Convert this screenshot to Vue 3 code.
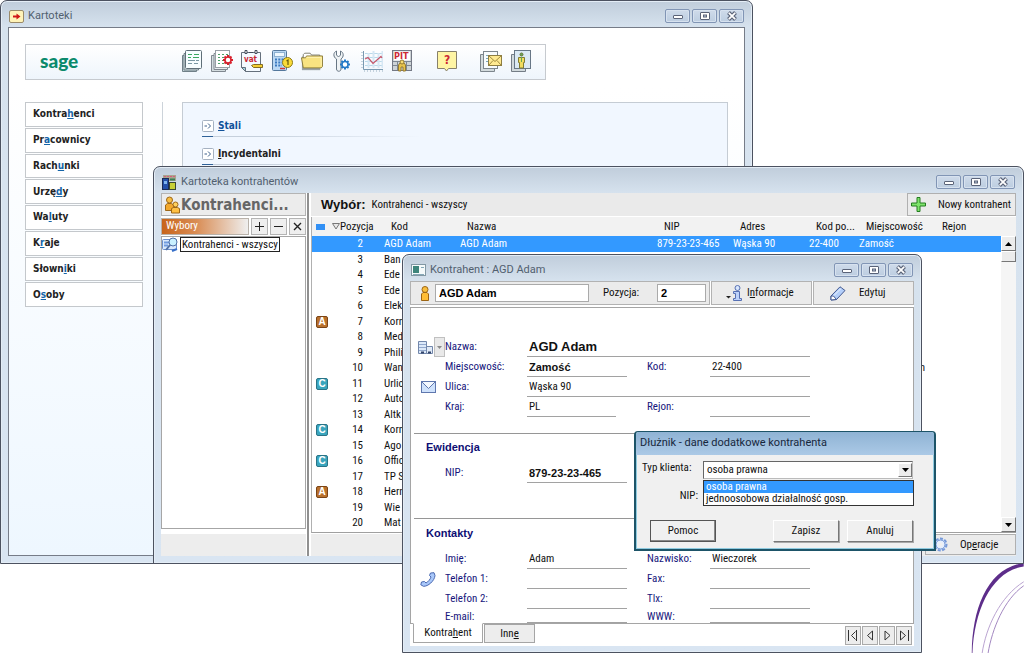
<script setup>
import { ref, h } from 'vue'

const WinButtons = () =>
  h('div', { class: 'win-buttons' }, [
    h('button', { type: 'button', 'aria-label': 'Minimalizuj' }, [
      h('svg', { viewBox: '0 0 14 10', width: 14, height: 10 }, [
        h('rect', { x: 2.5, y: 4.5, width: 9, height: 3, rx: 0.5, fill: '#fff', stroke: '#5a6378' })
      ])
    ]),
    h('button', { type: 'button', 'aria-label': 'Maksymalizuj' }, [
      h('svg', { viewBox: '0 0 14 10', width: 14, height: 10 }, [
        h('rect', { x: 2.5, y: 1.5, width: 9, height: 7, rx: 0.5, fill: '#fff', stroke: '#5a6378' }),
        h('rect', { x: 5.5, y: 4, width: 3, height: 2, fill: '#b9c9dc', stroke: '#5a6378' })
      ])
    ]),
    h('button', { type: 'button', 'aria-label': 'Zamknij' }, [
      h('svg', { viewBox: '0 0 14 10', width: 14, height: 10 }, [
        h('path', { d: 'M3.5 1.5L10.5 8.5M10.5 1.5L3.5 8.5', stroke: '#5a6378', 'stroke-width': 4 }),
        h('path', { d: 'M3.8 1.8L10.2 8.2M10.2 1.8L3.8 8.2', stroke: '#fff', 'stroke-width': 1.8 })
      ])
    ])
  ])

const menu = [
  ['Kontra', 'h', 'enci'],
  ['Pr', 'a', 'cownicy'],
  ['Rach', 'u', 'nki'],
  ['Urzę', 'd', 'y'],
  ['Wa', 'l', 'uty'],
  ['K', 'r', 'aje'],
  ['Słown', 'i', 'ki'],
  ['O', 's', 'oby']
]

const rows = [
  { pos: 2, kod: 'AGD Adam', nazwa: 'AGD Adam', nip: '879-23-23-465', adres: 'Wąska 90', poczta: '22-400', miasto: 'Zamość' },
  { pos: 3, kod: 'Ban' },
  { pos: 4, kod: 'Ede' },
  { pos: 5, kod: 'Ede' },
  { pos: 6, kod: 'Elek' },
  { pos: 7, kod: 'Korn', tag: 'A' },
  { pos: 8, kod: 'Med' },
  { pos: 9, kod: 'Phili' },
  { pos: 10, kod: 'Wan', tail: 'n' },
  { pos: 11, kod: 'Urlic', tag: 'C' },
  { pos: 12, kod: 'Auto' },
  { pos: 13, kod: 'Altk' },
  { pos: 14, kod: 'Korn', tag: 'C' },
  { pos: 15, kod: 'Ago' },
  { pos: 16, kod: 'Offic', tag: 'C' },
  { pos: 17, kod: 'TP S' },
  { pos: 18, kod: 'Hern', tag: 'A' },
  { pos: 19, kod: 'Wie' },
  { pos: 20, kod: 'Mat' }
]

const name = ref('AGD Adam')
const position = ref('2')
const clientTypes = ['osoba prawna', 'jednoosobowa działalność gosp.']
const clientType = ref(clientTypes[0])
</script>

<template>
  <main class="desktop">
    <svg class="swoosh" viewBox="0 0 54 92" aria-hidden="true">
      <path d="M1.500 92C2 46 18 6 54 1V4.500C22 9 4 48 2.200 92Z" fill="#5d2d8a" />
      <path d="M12 92C16 66 30 35 54 20" fill="none" stroke="#b9a3d0" />
      <path d="M18 92C22 68 34 38 54 24" fill="none" stroke="#a287c0" />
    </svg>

    <section class="window files" aria-label="Kartoteki">
      <header class="titlebar">
        <svg class="title-icon" viewBox="0 0 15 13" width="15" height="13">
          <rect x=".5" y=".5" width="14" height="12" rx="1.500" fill="#fff3b8" stroke="#9a8a6a" />
          <path d="M4 5.500H7.500V3.500L11.500 6.500L7.500 9.500V7.500H4Z" fill="#d01818" />
        </svg>
        <h1>Kartoteki</h1>
        <WinButtons />
      </header>
      <div class="files-body">
        <nav class="toolbar" aria-label="Narzędzia">
          <span class="logo">sage</span>
          <div class="tools">
            <button type="button" aria-label="Dokumenty">
              <svg viewBox="0 0 22 22">
                <path d="M1.500 5.500H15.500V21.500H1.500Z" fill="#c3d2d6" stroke="#708088" />
                <path d="M3 3.500H17.500V20H3Z" fill="#d8e4e6" stroke="#708088" />
                <rect x="4.500" y=".5" width="16" height="18" rx="1" fill="#f6fdff" stroke="#5f6f78" />
                <path d="M7 4.500H11M13 4.500H18M7 7.500H10M12 7.500H18" stroke="#38a860" />
                <path d="M7 10.500H14M15 10.500H18M7 13.500H11M13 13.500H17" stroke="#7a98a4" />
              </svg>
            </button>
            <button type="button" aria-label="Ustawienia dokumentów">
              <svg viewBox="0 0 22 22">
                <path d="M.5 5.500H14.500V21.500H.5Z" fill="#d4dde0" stroke="#808890" />
                <path d="M3 3.500H16.500V19.500H3Z" fill="#e6ecee" stroke="#808890" />
                <rect x="4.500" y=".5" width="14" height="17" fill="#fff" stroke="#98a0a6" />
                <path d="M7 4.500H17M7 7.500H17M7 10.500H17M7 13.500H17" stroke="#4aa268" stroke-dasharray="2 2" />
                <path d="M17 5V15M12 10H22M13.500 6.500L20.500 13.500M20.500 6.500L13.500 13.500" stroke="#d8202c" stroke-width="2" />
                <circle cx="17" cy="10" r="3" fill="#fff" stroke="#d8202c" stroke-width="1.500" />
              </svg>
            </button>
            <button type="button" aria-label="VAT">
              <svg viewBox="0 0 22 22">
                <path d="M.5 2.500H19.500V21.500H4.500L.5 17.500Z" fill="#f4faff" stroke="#65707c" />
                <path d="M.5 17.500H4.500V21.500Z" fill="#9fd0dc" stroke="#65707c" />
                <path d="M4 .5H6V3.500H4ZM14 .5H16V3.500H14ZM8 2.500H12" fill="#fff" stroke="#444c5a" />
                <text x="3" y="12" class="vat">vat</text>
                <path d="M10.500 15.500L12.500 14.500H21.500V17.500H12.500Z" fill="#f4cf32" stroke="#836d22" />
              </svg>
            </button>
            <button type="button" aria-label="Kalkulator">
              <svg viewBox="0 0 22 22">
                <rect x="1.500" y=".5" width="14" height="20" rx="1" fill="#bad8f4" stroke="#54789c" />
                <rect x="3.500" y="2.500" width="10" height="4" fill="#eef8ff" stroke="#8eb2d2" />
                <path d="M4 9.500H13M4 12.500H11M4 15.500H11" stroke="#3b7ac0" stroke-width="2" stroke-dasharray="2 1.300" />
                <path d="M9 18.500H14" stroke="#d03838" stroke-width="1.500" />
                <circle cx="16.500" cy="12.500" r="5" fill="#fadb38" stroke="#8b7a16" />
                <path d="M15.500 11L17 10V15" fill="none" stroke="#66590c" stroke-width="1.200" />
              </svg>
            </button>
            <button type="button" aria-label="Foldery">
              <svg viewBox="0 0 24 22">
                <path d="M1 6H21V21H1Z" fill="#9aa2a6" />
                <path d="M2.500 6V4L4 2.500H10L11.500 4.500H20.500V9H2.500Z" fill="#fff" stroke="#777768" />
                <path d="M.5 7.500H5L6 5.500H23.500V17L22 18.500H2.500Z" fill="#f8e381" stroke="#877735" />
                <path d="M6 7H22V16" fill="none" stroke="#fff4b9" />
              </svg>
            </button>
            <button type="button" aria-label="Narzędzia">
              <svg viewBox="0 0 18 22">
                <path d="M3.500 1V5L5.500 7L7.500 5V1C11 2.500 11 7 8 9V19C8 22 3.500 22 3.500 19V9C0 7 0 2.500 3.500 1Z" fill="#eff3f5" stroke="#677684" />
                <path d="M12 9.500V19.500M7 14.500H17M8.500 11L15.500 18M15.500 11L8.500 18" stroke="#247ac8" stroke-width="2" />
                <circle cx="12" cy="14.500" r="3" fill="#fff" stroke="#247ac8" stroke-width="1.500" />
              </svg>
            </button>
            <button type="button" aria-label="Wykresy">
              <svg viewBox="0 0 22 22">
                <path d="M4 3.500H22M4 7.500H22M4 11.500H22M4 15.500H22" stroke="#b9d9e9" />
                <path d="M7.500 3V18M12.500 1V18M17.500 3V18M21.500 1V18" stroke="#d6e7f4" stroke-width="2" />
                <path d="M2.500 1V19.500H22" fill="none" stroke="#7999b1" />
                <path d="M1 2V20M3 21H22" stroke="#95adbe" stroke-dasharray="1 2" />
                <path d="M4 9L7 7.500L12 13.500L20 6.500L21 8" fill="none" stroke="#c65468" stroke-width="1.200" />
              </svg>
            </button>
            <button type="button" aria-label="PIT">
              <svg viewBox="0 0 22 22">
                <rect x="1.500" y=".5" width="19" height="20" fill="#cdd3d6" stroke="#747985" />
                <rect x="3" y="1.500" width="16" height="9" fill="#fff" />
                <path d="M2 11.500H20M2 15.500H20M6.500 11V20M15.500 11V20" stroke="#7d8792" />
                <text x="3" y="9" class="pit">PIT</text>
                <path d="M7.500 21V15L9 13H13L14.500 15V21H12V17H10V21Z" fill="#e7c34b" stroke="#957a30" />
                <circle cx="11" cy="12" r="2" fill="#f7dc73" stroke="#957a30" />
              </svg>
            </button>
            <button type="button" class="help-tool" aria-label="Pomoc">
              <svg viewBox="0 0 22 22">
                <path d="M1.500 1.500H20.500V18.500H12.500L10.500 21L8.500 18.500H1.500Z" fill="#fff5a4" stroke="#87806b" />
                <text x="8" y="14" class="question">?</text>
              </svg>
            </button>
            <button type="button" class="mail-tool" aria-label="Poczta">
              <svg viewBox="0 0 22 22">
                <path d="M.5 4.500H14.500V21.500H.5Z" fill="#d3dbdd" stroke="#7d868d" />
                <rect x="3.500" y="1.500" width="14" height="17" fill="#f7fbfd" stroke="#7d868d" />
                <path d="M6 5.500H14M6 8.500H9M6 11.500H9" stroke="#7ba6b9" stroke-dasharray="2 1" />
                <rect x="8.500" y="5.500" width="13" height="10" fill="#ffea91" stroke="#8e7e42" />
                <path d="M9 6L15 11.500L21 6M9 15L13 10.500M21 15L17 10.500" fill="none" stroke="#a18b3f" />
              </svg>
            </button>
            <button type="button" aria-label="Osoby">
              <svg viewBox="0 0 22 22">
                <path d="M1.500 4.500H15.500V21.500H1.500Z" fill="#d2dadd" stroke="#747d86" />
                <rect x="4.500" y=".5" width="16" height="18" fill="#dbe9f3" stroke="#687786" />
                <circle cx="11.500" cy="4.500" r="1.500" fill="#65a456" stroke="#687634" />
                <path d="M8.500 7.500H14.500V12.500H13.500V18H9.500V12.500H8.500Z" fill="#f1dc5e" stroke="#827c32" />
                <path d="M11.500 7V12" stroke="#65a456" />
              </svg>
            </button>
          </div>
        </nav>
        <div class="files-columns">
          <nav class="side-menu" aria-label="Kartoteki">
            <button v-for="item in menu" :key="item.join('')" type="button">
              {{ item[0] }}<u>{{ item[1] }}</u>{{ item[2] }}
            </button>
          </nav>
          <div class="rule"></div>
          <div class="panel">
            <a href="#stali" class="current">
              <svg viewBox="0 0 12 12"><rect x=".5" y=".5" width="11" height="11" rx="1" fill="#fff" stroke="#a5b1c1" /><path d="M2.500 6H5M6 3.500L8.500 6L6 8.500" fill="none" stroke="#3c5f8a" /></svg>
              <span><u>S</u>tali</span>
            </a>
            <a href="#incydentalni">
              <svg viewBox="0 0 12 12"><rect x=".5" y=".5" width="11" height="11" rx="1" fill="#fff" stroke="#a5b1c1" /><path d="M2.500 6H5M6 3.500L8.500 6L6 8.500" fill="none" stroke="#3c5f8a" /></svg>
              <span><u>I</u>ncydentalni</span>
            </a>
          </div>
        </div>
      </div>
    </section>

    <section class="window register" aria-label="Kartoteka kontrahentów">
      <header class="titlebar">
        <svg class="title-icon" viewBox="0 0 15 15" width="15" height="15">
          <rect x="1" y="0" width="13" height="6" fill="#a9a48e" />
          <path d="M2 1.500H13" stroke="#d45f7c" stroke-dasharray="2 1" />
          <rect x=".5" y="3.500" width="6" height="11" fill="#2450aa" stroke="#1c2c56" />
          <rect x="2" y="6" width="3" height="3" fill="#7fb4ee" />
          <rect x="7.500" y="7.500" width="6" height="7" fill="#c7cf35" stroke="#3a4832" />
          <path d="M8 4.500H13" stroke="#3a8058" stroke-width="2" />
        </svg>
        <h2>Kartoteka kontrahentów</h2>
        <WinButtons />
      </header>
      <div class="register-body">
        <aside class="left-pane">
          <h3 class="pane-title">
            <svg viewBox="0 0 18 18" width="18" height="18">
              <circle cx="6.500" cy="4" r="3" fill="#f8bd42" stroke="#9d6818" />
              <path d="M2.500 14.500V9L4.500 7.500H8.500L10.500 9V14.500Z" fill="#f3a82c" stroke="#9d6818" />
              <circle cx="12.500" cy="8.500" r="2.500" fill="#ffd15c" stroke="#9d6818" />
              <path d="M8.500 17V12.500L10.500 11.500H14.500L16.500 12.500V17Z" fill="#ffc043" stroke="#9d6818" />
            </svg>
            Kontrahenci...
          </h3>
          <div class="choices">
            <span>Wybory</span>
            <button type="button" aria-label="Dodaj"><svg viewBox="0 0 9 9"><path d="M4.500 0V9M0 4.500H9" stroke="#222" /></svg></button>
            <button type="button" aria-label="Usuń"><svg viewBox="0 0 9 9"><path d="M0 4.500H9" stroke="#222" /></svg></button>
            <button type="button" aria-label="Zamknij"><svg viewBox="0 0 9 9"><path d="M1 1L8 8M8 1L1 8" stroke="#222" stroke-width="1.400" /></svg></button>
          </div>
          <div class="tree">
            <svg viewBox="0 0 17 15" width="17" height="15">
              <rect x=".5" y="2.500" width="14" height="10" rx="1" fill="#d9e9fc" stroke="#6c8fcb" />
              <path d="M2 5.500H7M2 8.500H6" stroke="#6f9ade" stroke-width="2" />
              <circle cx="11" cy="5" r="4" fill="#c8f0ff" stroke="#5070a6" />
              <path d="M8 8L4 13" stroke="#5070a6" stroke-width="2" />
              <path d="M10 14L15 12" stroke="#376fc9" stroke-width="2" />
            </svg>
            <button type="button">Kontrahenci - wszyscy</button>
          </div>
          <div class="status"></div>
        </aside>
        <div class="right-pane">
          <div class="choice-bar">
            <strong>Wybór:</strong>
            <span>Kontrahenci - wszyscy</span>
            <button type="button">
              <svg viewBox="0 0 15 15" width="15" height="15"><path d="M6 .5H9V6H14.500V9H9V14.500H6V9H.5V6H6Z" fill="#7fe36c" stroke="#247c20" /></svg>
              <span>Nowy kontrahent</span>
            </button>
          </div>
          <div class="list">
            <table>
              <colgroup>
                <col class="c-tag" /><col class="c-pos" /><col class="c-kod" /><col class="c-nazwa" /><col class="c-nip" /><col class="c-adres" /><col class="c-poczta" /><col class="c-miasto" /><col />
              </colgroup>
              <thead>
                <tr>
                  <th><i class="mark"></i></th>
                  <th class="pos-head"><svg viewBox="0 0 8 7" width="8" height="7"><path d="M.5 .5H7.500L4 6Z" fill="#e8e8e8" stroke="#777" /></svg>Pozycja</th>
                  <th>Kod</th><th>Nazwa</th><th>NIP</th><th>Adres</th><th>Kod po...</th><th>Miejscowość</th><th>Rejon</th>
                </tr>
              </thead>
              <tbody>
                <tr v-for="row in rows" :key="row.pos" :class="{ selected: row.pos === 2 }">
                  <td><b v-if="row.tag" class="tag" :class="row.tag">{{ row.tag }}</b></td>
                  <td class="pos">{{ row.pos }}</td>
                  <td>{{ row.kod }}</td>
                  <td>{{ row.nazwa }}</td>
                  <td>{{ row.nip }}</td>
                  <td>{{ row.adres }}</td>
                  <td>{{ row.poczta }}</td>
                  <td :class="{ tail: row.tail }">{{ row.miasto || row.tail }}</td>
                  <td></td>
                </tr>
              </tbody>
            </table>
            <div class="scroll">
              <button type="button" aria-label="W górę"><svg viewBox="0 0 7 4"><path d="M3.500 0L7 4H0Z" /></svg></button>
              <i class="thumb"></i>
              <button type="button" class="down" aria-label="W dół"><svg viewBox="0 0 7 4"><path d="M0 0H7L3.500 4Z" /></svg></button>
            </div>
          </div>
          <div class="list-footer">
            <button type="button">
              <svg viewBox="0 0 15 15" width="15" height="15">
                <circle cx="7.500" cy="7.500" r="6" fill="#d5e5fb" stroke="#7799d8" stroke-width="2" stroke-dasharray="3 1.500" />
                <circle cx="7.500" cy="7.500" r="4.500" fill="#e6effc" stroke="#6f93d4" />
                <circle cx="7.500" cy="7.500" r="2" fill="#f0f0f0" />
              </svg>
              <span>Op<u>e</u>racje</span>
            </button>
          </div>
        </div>
      </div>
    </section>

    <section class="window record" aria-label="Kontrahent">
      <header class="titlebar">
        <svg class="title-icon" viewBox="0 0 15 12" width="15" height="12">
          <rect x=".5" y=".5" width="14" height="11" fill="#f5fafb" stroke="#8298a4" />
          <rect x="2" y="2" width="6" height="7" fill="#3e857c" />
          <path d="M10 3.500H13M2 10.500H13" stroke="#86a8b8" />
        </svg>
        <h2>Kontrahent : AGD Adam</h2>
        <WinButtons />
      </header>
      <div class="record-body">
        <div class="record-tools">
          <div class="ident">
            <svg viewBox="0 0 10 15" width="10" height="15">
              <circle cx="5" cy="3.500" r="3" fill="#f9be3d" stroke="#9c6515" />
              <path d="M1.500 14.500V8L3 6.500H7L8.500 8V14.500Z" fill="#ffbd35" stroke="#9c6515" />
            </svg>
            <input v-model="name" class="name" aria-label="Kod kontrahenta" />
            <label for="position">Pozycja:</label>
            <input id="position" v-model="position" class="position" />
          </div>
          <button type="button" class="info">
            <svg viewBox="0 0 17 16" width="17" height="16">
              <path d="M0 11H5L2.500 13.500Z" fill="#222" />
              <circle cx="11.500" cy="3" r="2.500" fill="#d9e7fd" stroke="#5770b3" />
              <path d="M7.500 6.500H13.500V13.500H15.500V15.500H7.500V13.500H9.500V8.500H7.500Z" fill="#bdd2fb" stroke="#5770b3" />
            </svg>
            <span>I<u>n</u>formacje</span>
          </button>
          <button type="button" class="edit">
            <svg viewBox="0 0 16 15" width="16" height="15">
              <path d="M1 10L10 .8L15 4.500L6.500 13.500L1 14Z" fill="#b4cffa" stroke="#41578f" />
              <path d="M1 10L3.500 10L6.500 13.500L1 14Z" fill="#fff" stroke="#41578f" />
              <path d="M4 9.500L11 2.500" stroke="#edf5ff" />
            </svg>
            <span>Edytuj</span>
          </button>
        </div>
        <form class="form" @submit.prevent>
          <div class="group address">
            <span class="row-icon">
              <svg viewBox="0 0 15 13" width="15" height="13">
                <path d="M.5 .5H8.500V12.500H.5Z" fill="#dce9f9" stroke="#7287ab" />
                <path d="M1 3.500H8M1 6.500H8M1 9.500H8" stroke="#93a9ce" />
                <path d="M8.500 5.500H14.500V12.500H8.500Z" fill="#e1eaf6" stroke="#7287ab" />
                <path d="M3 11.500H6M10 11.500H13" stroke="#33456b" stroke-width="2" />
              </svg>
              <button type="button" class="mini" aria-label="Rodzaj"><svg viewBox="0 0 5 3" width="5" height="3"><path d="M0 0H5L2.500 3Z" fill="#8a8a8a" /></svg></button>
            </span>
            <label for="nazwa">Nazwa:</label><input id="nazwa" class="wide large" value="AGD Adam" />
            <label for="miejsc" class="first">Miejscowość:</label><input id="miejsc" class="strong" value="Zamość" />
            <label for="kod" class="second">Kod:</label><input id="kod" value="22-400" />
            <span class="row-icon">
              <svg viewBox="0 0 15 12" width="15" height="12">
                <rect x=".5" y=".5" width="14" height="11" fill="#cfe2fc" stroke="#5f77ae" />
                <path d="M1 1L7.500 7.500L14 1" fill="#f4f9ff" stroke="#5f77ae" />
              </svg>
            </span>
            <label for="ulica">Ulica:</label><input id="ulica" class="wide" value="Wąska 90" />
            <label for="kraj" class="first">Kraj:</label><input id="kraj" class="short" value="PL" />
            <label for="rejon" class="second">Rejon:</label><input id="rejon" />
          </div>
          <fieldset class="ewidencja">
            <legend>Ewidencja</legend>
            <div class="group">
              <label for="nip" class="first">NIP:</label><input id="nip" class="strong" value="879-23-23-465" />
            </div>
          </fieldset>
          <fieldset class="kontakty">
            <legend>Kontakty</legend>
            <div class="group">
              <label for="imie" class="first">Imię:</label><input id="imie" value="Adam" />
              <label for="nazwisko" class="second">Nazwisko:</label><input id="nazwisko" value="Wieczorek" />
              <span class="row-icon phone">
                <svg viewBox="0 0 16 15" width="16" height="15">
                  <path d="M10.500 1L14 .7L15 3.500C14.500 9 8 14.500 3.500 14.300L.8 12.800L1.500 10L4.500 9.500L6 11C8 10 10.500 7 11 5L9.500 3.500Z" fill="#a9c8fa" stroke="#4a68b0" />
                </svg>
              </span>
              <label for="tel1">Telefon 1:</label><input id="tel1" />
              <label for="fax" class="second">Fax:</label><input id="fax" />
              <label for="tel2" class="first">Telefon 2:</label><input id="tel2" />
              <label for="tlx" class="second">Tlx:</label><input id="tlx" />
              <label for="email" class="first tight">E-mail:</label><input id="email" />
              <label for="www" class="second tight">WWW:</label><input id="www" />
            </div>
          </fieldset>
        </form>
        <footer class="tabs">
          <button type="button" class="active">Kontra<u>h</u>ent</button>
          <button type="button">Inn<u>e</u></button>
          <div class="pager">
            <button type="button" aria-label="Pierwszy"><svg viewBox="0 0 12 11"><path d="M1.500 0V11M9.500 0V11M8.500 1.500L4.500 5.500L8.500 9.500" /></svg></button>
            <button type="button" aria-label="Poprzedni"><svg viewBox="0 0 12 11"><path d="M8.500 1V10L3.500 5.500Z" /></svg></button>
            <button type="button" aria-label="Następny"><svg viewBox="0 0 12 11"><path d="M4 1V10L9 5.500Z" /></svg></button>
            <button type="button" aria-label="Ostatni"><svg viewBox="0 0 12 11"><path d="M10.500 0V11M2.500 1V10L7.500 5.500Z" /></svg></button>
          </div>
        </footer>
      </div>
    </section>

    <section class="dialog" role="dialog" aria-labelledby="dialog-title">
      <h2 id="dialog-title">Dłużnik - dane dodatkowe kontrahenta</h2>
      <div class="dialog-body">
        <div class="dialog-form">
          <label for="typ">Typ klienta:</label>
          <div class="combo">
            <select id="typ" v-model="clientType">
              <option v-for="t in clientTypes" :key="t">{{ t }}</option>
            </select>
            <i class="drop"><svg viewBox="0 0 7 4"><path d="M0 0H7L3.500 4Z" /></svg></i>
            <ul role="listbox" aria-label="Typ klienta">
              <li v-for="t in clientTypes" :key="t" role="option" :aria-selected="t === clientType" @click="clientType = t">{{ t }}</li>
            </ul>
          </div>
          <span class="nip">NIP:</span>
        </div>
        <div class="dialog-actions">
          <button type="button" class="default">Pomoc</button>
          <button type="button">Zapisz</button>
          <button type="button">Anuluj</button>
        </div>
      </div>
    </section>
  </main>
</template>

<style>
body {
  margin: 0;
  background: #fff;
}
.win-buttons {
  display: flex;
  gap: 2px;
  margin-left: auto;
}
.win-buttons button {
  display: grid;
  place-items: center;
  box-sizing: border-box;
  width: 25px;
  height: 14px;
  padding: 0;
  border: 1px solid #8195b5;
  border-radius: 2px;
  background: linear-gradient(#cfdbea, #bccde0);
  box-shadow: inset 0 0 0 1px #d7e2ef;
}
</style>

<style scoped>
* {
  box-sizing: border-box;
}
.desktop {
  position: relative;
  min-height: 100vh;
  overflow: hidden;
  background: #fff;
  color: #111;
  font-family: "Liberation Sans Narrow", "Roboto Condensed", Roboto, sans-serif;
  font-size: 11px;
  line-height: 14px;
}
button,
input,
select {
  margin: 0;
  padding: 0;
  border: 0;
  border-radius: 0;
  color: inherit;
  font: inherit;
}
h1, h2, h3, ul, fieldset, legend {
  margin: 0;
  padding: 0;
}
.swoosh {
  position: absolute;
  right: 0;
  bottom: 0;
  width: 54px;
  height: 91px;
}

/* windows */
.window {
  position: absolute;
  display: flex;
  flex-direction: column;
  padding: 0 7px 7px;
  border: 1px solid #4c5260;
  border-radius: 7px 7px 0 0;
  background: linear-gradient(#c0cddb, #d6e2ee 26px, #d9e5f2);
  box-shadow: inset 0 0 0 1px #e4edf6;
}
.files { left: 0; top: 0; width: 753px; height: 564px; }
.register { left: 153px; top: 166px; width: 871px; height: 398px; }
.record { left: 402px; top: 254px; width: 520px; height: 399px; }
.titlebar {
  display: flex;
  flex: none;
  align-items: center;
  gap: 4px;
  height: 26px;
  padding: 4px 1px 0 1px;
}
.titlebar h1,
.titlebar h2 {
  color: #51606f;
  font: 400 11px/16px Roboto, "Noto Sans", sans-serif;
}

/* Kartoteki */
.files-body {
  flex: 1;
  padding: 16px 16px 0 16px;
  border: 1px solid #767c88;
  background: linear-gradient(#fff 60px, #eef7ff);
  display: flex;
  flex-direction: column;
  gap: 22px;
}
.toolbar {
  display: flex;
  align-items: center;
  width: 521px;
  height: 36px;
  padding: 0 0 2px 14px;
  border: 1px solid #c6cacf;
  background: linear-gradient(#fff, #eef5fc);
}
.logo {
  width: 141px;
  color: #0b8a6c;
  font: 900 19px/28px Lato, sans-serif;
}
.tools {
  display: flex;
  gap: 8px;
}
.tools button {
  width: 22px;
  height: 22px;
  background: none;
}
.tools svg {
  display: block;
  width: 22px;
  height: 22px;
}
.tools .help-tool { margin-left: 15px; }
.tools .mail-tool { margin-left: 14px; }
.vat, .pit, .question {
  fill: #cc2834;
  font: 700 8px "DejaVu Sans Condensed", sans-serif;
}
.pit { font-size: 9px; }
.question { font-size: 12px; }
.files-columns {
  flex: 1;
  display: grid;
  grid-template-columns: 118px 1px 1fr;
  gap: 19px;
}
.side-menu {
  display: grid;
  grid-auto-rows: 1fr;
  align-self: start;
  gap: 1px;
  height: 205px;
}
.side-menu button {
  padding-left: 7px;
  border: 1px solid #c4c8cc;
  background: #fff;
  color: #222;
  font: 700 10px/16px "DejaVu Sans Condensed", "DejaVu Sans", sans-serif;
  text-align: left;
}
.side-menu u { color: #1464a8; }
.rule { background: #ccd3da; }
.panel {
  padding: 13px 19px 0;
  border: 1px solid #c5ccd4;
  background: #f1f7ff;
}
.panel a {
  display: flex;
  align-items: center;
  gap: 4px;
  height: 21px;
  margin-bottom: 7px;
  border-bottom: 1px solid transparent;
  border-image: linear-gradient(90deg, #2f6198 12px, #c6d0dc 12px, #c6d0dc 60px, transparent 220px) 1;
  color: #222;
  font: 700 10px/20px "DejaVu Sans Condensed", "DejaVu Sans", sans-serif;
  text-decoration: none;
}
.panel svg { width: 12px; height: 12px; }
.panel .current { color: #10529a; }

/* Kartoteka kontrahentów */
.register-body {
  flex: 1;
  display: grid;
  grid-template-columns: 146px 1fr;
  min-height: 0;
  background: #fff;
}
.left-pane {
  display: flex;
  flex-direction: column;
  border-right: 1px solid #fff;
}
.pane-title {
  display: flex;
  align-items: center;
  height: 23px;
  padding-left: 1px;
  border: 1px solid #b4b4b4;
  background: #ececec;
  color: #666;
  font: 700 15px/20px "DejaVu Sans Condensed", "DejaVu Sans", sans-serif;
}
.pane-title svg { flex: none; }
.choices {
  display: flex;
  gap: 2px;
  height: 17px;
  margin-top: 2px;
}
.choices span {
  flex: 1;
  padding-left: 4px;
  border: 1px solid #b9b2aa;
  background: linear-gradient(90deg, #c8641a, #d98d55 40%, #efefef);
  color: #fff;
}
.choices button {
  display: grid;
  place-items: center;
  width: 17px;
  border: 1px solid #b4b4b4;
  background: #efefef;
}
.choices svg { width: 9px; height: 9px; }
.tree {
  flex: 1;
  display: flex;
  align-items: flex-start;
  gap: 1px;
  margin-top: 1px;
  border: 1px solid #a6a6a6;
}
.tree svg { flex: none; }
.tree button {
  height: 15px;
  padding: 0 1px;
  border: 1px solid #222;
  background: #fff;
  line-height: 13px;
  white-space: nowrap;
}
.status {
  height: 22px;
  margin-top: 5px;
  background: #ededed;
}
.right-pane {
  display: flex;
  flex-direction: column;
  min-width: 0;
  padding-left: 2px;
  border-left: 2px solid #909090;
}
.choice-bar {
  display: flex;
  align-items: center;
  gap: 6px;
  height: 23px;
  padding-left: 10px;
  background: #eaeaea;
}
.choice-bar strong {
  font: 700 13px/16px "Liberation Sans", sans-serif;
}
.choice-bar button {
  display: flex;
  align-items: center;
  justify-content: space-between;
  width: 109px;
  height: 23px;
  margin-left: auto;
  padding: 0 4px 0 3px;
  border: 1px solid #b0b0b0;
  background: #ebebeb;
  white-space: nowrap;
}
.list {
  display: grid;
  grid-template-columns: 1fr 15px;
  flex: 1;
  margin-top: 1px;
  border-bottom: 1px solid #a0a0a0;
  border-left: 1px solid #b0b0b0;
  align-content: stretch;
}
table {
  align-self: start;
  width: 100%;
  border-collapse: collapse;
  table-layout: fixed;
}
.c-tag { width: 20px; }
.c-pos { width: 52px; }
.c-kod { width: 76px; }
.c-nazwa { width: 197px; }
.c-nip { width: 76px; }
.c-adres { width: 76px; }
.c-poczta { width: 50px; }
.c-miasto { width: 76px; }
th, td {
  padding: 0;
  overflow: hidden;
  line-height: 14px;
  text-align: left;
  white-space: nowrap;
}
th {
  height: 19px;
  padding-left: 7px;
  background: #f2f2f2;
  font-weight: 400;
}
th:first-child { padding-left: 4px; }
th.pos-head { padding: 0; }
.mark {
  display: block;
  width: 9px;
  height: 6px;
  background: #3290f5;
}
td { height: 16px; }
tbody tr:nth-child(even) td { height: 15px; }
td.pos { padding-right: 21px; text-align: right; }
td:first-child { padding-left: 4px; }
td.tail { padding-right: 10px; text-align: right; }
.selected { background: #3399ff; color: #fff; }
.tag {
  display: block;
  width: 12px;
  height: 12px;
  border: 1px solid #2a7487;
  border-radius: 2px;
  background: #3aa5bd;
  color: #fff;
  font: 700 10px/10px "Liberation Sans", sans-serif;
  text-align: center;
}
.tag.A { border-color: #7b4416; background: #b8702c; }
.scroll {
  display: flex;
  flex-direction: column;
  border-top: 19px solid #f2f2f2;
  background: #f5f5f5;
}
.scroll button,
.thumb,
.drop {
  display: grid;
  place-items: center;
  height: 15px;
  border: 1px solid;
  border-color: #fff #777 #777 #fff;
  background: #ececec;
}
.scroll .thumb { height: 11px; }
.scroll .down { margin-top: auto; }
.scroll svg, .drop svg { width: 7px; height: 4px; }
.list-footer {
  display: flex;
  justify-content: flex-end;
  height: 22px;
  margin-top: 1px;
  background: #ededed;
}
.list-footer button {
  display: flex;
  align-items: center;
  gap: 12px;
  width: 91px;
  height: 21px;
  padding-left: 7px;
  border: 1px solid #b0b0b0;
  background: #ebebeb;
}

/* Kontrahent */
.record-body {
  flex: 1;
  display: flex;
  flex-direction: column;
  background: #fff;
}
.record-tools {
  display: grid;
  grid-template-columns: 1fr 101px 101px;
  gap: 1px;
  height: 24px;
}
.record-tools > * {
  display: flex;
  align-items: center;
  border: 1px solid #b2b2b2;
  background: #ebebeb;
}
.record-tools .ident { padding-left: 9px; }
.ident input {
  height: 18px;
  padding-left: 3px;
  border: 1px solid #aaa;
  background: #fff;
  color: #000;
  font: 700 11px/16px "Liberation Sans", sans-serif;
}
.ident .name { width: 154px; margin: 0 14px 0 5px; }
.ident .position { width: 49px; margin-left: auto; margin-right: 3px; }
.record-tools .info { gap: 4px; padding-left: 14px; }
.record-tools .edit { gap: 13px; padding-left: 16px; }
.form {
  flex: 1;
  padding-top: 29px;
  border: 1px solid #a5a5a5;
  margin-top: 2px;
}
.group {
  display: grid;
  grid-template-columns: 34px 82px 100px 20px 63px 100px;
  grid-auto-rows: 20px;
}
.group label {
  color: #16167c;
  line-height: 20px;
}
.group .tight { line-height: 15px; }
.group .first { grid-column: 2; }
.group .second { grid-column: 5; }
.group input {
  min-width: 0;
  width: 100%;
  padding-left: 2px;
  border-bottom: 1px solid #a2a2a2;
  background: none;
}
.group .wide { grid-column: 3 / 7; }
.group .short { width: 89px; }
.group .strong {
  font: 700 11px/16px "Liberation Sans", sans-serif;
}
.group .large {
  font: 700 13px/16px "Liberation Sans", sans-serif;
}
.row-icon {
  display: flex;
  align-items: center;
  justify-content: flex-end;
  gap: 1px;
}
.row-icon svg { flex: none; }
.address > .row-icon:not(:first-child),
.phone { justify-content: center; }
.mini {
  display: grid;
  place-items: center;
  flex: none;
  width: 11px;
  height: 20px;
  border: 1px solid #c0c0c0;
  background: #e9e9e9;
}
fieldset {
  min-width: 0;
  margin-left: 3px;
  border: 0;
  border-top: 1px solid #969696;
}
fieldset legend {
  float: left;
  width: 100%;
  padding-left: 12px;
  color: #0d0d73;
  font: 700 11px/16px "Liberation Sans", sans-serif;
}
fieldset .group {
  clear: both;
  padding-top: 8px;
  margin-left: -3px;
}
.ewidencja { height: 85px; margin-top: 16px; padding-top: 5px; }
.kontakty { padding-top: 6px; }
.kontakty .group { grid-template-rows: 20px 20px 20px 14px; }
.tabs {
  display: flex;
  align-items: flex-start;
  height: 22px;
  padding: 0 2px 0 3px;
  gap: 1px;
}
.tabs > button {
  width: 51px;
  height: 19px;
  border: 1px solid #a5a5a5;
  background: #ededed;
}
.tabs > .active {
  width: 70px;
  height: 20px;
  margin-top: -1px;
  border-top-color: #fff;
  background: #fff;
}
.pager {
  display: flex;
  gap: 1px;
  margin: 2px 0 0 auto;
}
.pager button {
  display: grid;
  place-items: center;
  width: 16px;
  height: 19px;
  border: 1px solid #aaa;
  background: #ececec;
}
.pager svg { width: 12px; height: 11px; fill: none; stroke: #333; }

/* Dłużnik */
.dialog {
  position: absolute;
  left: 634px;
  top: 431px;
  width: 302px;
  height: 120px;
  border: 2px solid #1d5468;
  border-top-width: 1px;
  border-radius: 4px 4px 0 0;
  background: #f0f0f0;
  box-shadow: inset 0 0 0 1px #8fcbe0;
  color: #111;
}
.dialog h2 {
  height: 23px;
  padding-left: 4px;
  border-radius: 3px 3px 0 0;
  background: linear-gradient(#8fb3d4, #abc9e6);
  color: #17273c;
  font: 400 11px/22px Roboto, "Noto Sans", sans-serif;
}
.dialog-body {
  display: flex;
  flex-direction: column;
  gap: 12px;
  padding: 6px 21px 0 6px;
}
.dialog-form {
  display: grid;
  grid-template-columns: 61px 1fr;
  grid-template-rows: 18px 29px;
}
.dialog-form label { white-space: nowrap; }
.nip {
  padding: 10px 5px 0 0;
  text-align: right;
}
.combo {
  position: relative;
}
.combo select {
  width: 100%;
  height: 18px;
  padding-left: 3px;
  border: 1px solid;
  border-color: #666 #bbb #bbb #666;
  background: #fff;
  appearance: none;
}
.drop {
  position: absolute;
  top: 2px;
  right: 1px;
  width: 14px;
  height: 14px;
  pointer-events: none;
}
.combo ul {
  position: absolute;
  top: 19px;
  left: 0;
  right: -1px;
  border: 1px solid #333;
  background: #fff;
  list-style: none;
}
.combo li {
  height: 12px;
  padding-left: 2px;
  line-height: 12px;
}
.combo li[aria-selected="true"] {
  background: #3399ff;
  color: #fff;
}
.dialog-actions {
  display: flex;
  gap: 8px;
  padding-left: 8px;
}
.dialog-actions button {
  width: 66px;
  height: 22px;
  border: 1px solid;
  border-color: #fff #777 #777 #fff;
  background: #f0f0f0;
  box-shadow: 1px 1px 0 #a9a9a9;
}
.dialog-actions .default {
  margin-right: auto;
  border-color: #555;
  box-shadow: inset -1px -1px 0 #888;
}
</style>
